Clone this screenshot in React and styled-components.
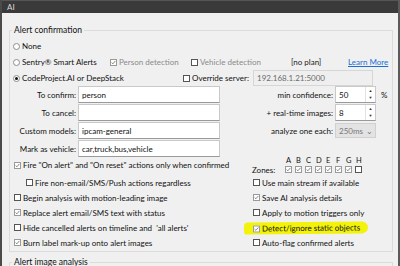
import React from 'react';
import styled, { createGlobalStyle } from 'styled-components';

const GlobalStyle = createGlobalStyle`
  html, body {
    margin: 0;
    padding: 0;
    background: #f0f0f0;
  }
  body {
    font-family: Lato, "Noto Sans", sans-serif;
    font-size: 8px;
    color: #111;
  }
`;

const Window = styled.div`
  width: 400px;
  height: 266px;
  box-sizing: border-box;
  border-left: 2px solid #4a4a4a;
  border-right: 2px solid #5a5a5a;
  background: #f0f0f0;
  overflow: hidden;
  display: flex;
  flex-direction: column;
`;

const TitleBar = styled.div`
  height: 13px;
  flex: none;
  display: flex;
  align-items: center;
  background: #3a3a3a;
  border-top: 1px solid #555;
  box-sizing: border-box;
  color: #d8d8d8;
  font-size: 8px;
  padding-left: 5px;
`;

const Body = styled.div`
  padding: 12px 5px 0 7px;
  display: flex;
  flex-direction: column;
  gap: 5px;
`;

const Group = styled.fieldset`
  margin: 0;
  padding: 2px 0 1px 3px;
  border: 1px solid #dcdcdc;
  min-width: 0;
`;

const Legend = styled.legend`
  padding: 0 2px;
  margin-left: -1px;
  font-size: 8.5px;
  line-height: 11px;
  color: #111;
`;

const RadioRow = styled.div`
  display: grid;
  grid-template-columns: ${(p) => p.$cols || '1fr'};
  align-items: center;
  height: ${(p) => p.$h || 16}px;
`;

const Choice = styled.label`
  display: flex;
  align-items: center;
  gap: 2px;
  white-space: nowrap;
  color: ${(p) => (p.$disabled ? '#8a8a8a' : '#111')};
`;

const RadioDot = styled.span`
  width: 7px;
  height: 7px;
  box-sizing: border-box;
  border-radius: 50%;
  border: 1px solid #8d8d8d;
  background: #fff;
  display: flex;
  align-items: center;
  justify-content: center;
  flex: none;

  &::after {
    content: '';
    width: 3px;
    height: 3px;
    border-radius: 50%;
    background: ${(p) => (p.$on ? '#111' : 'transparent')};
  }
`;

const Box = styled.span`
  width: 7px;
  height: 7px;
  box-sizing: border-box;
  border: 1px solid ${(p) => (p.$on ? '#9a9a9a' : '#555')};
  background: #fff;
  flex: none;
  display: flex;
  align-items: center;
  justify-content: center;
`;

const Check = ({ on }) => (
  <Box $on={on}>
    {on && (
      <svg width="5" height="5" viewBox="0 0 5 5">
        <path d="M0.6 2.6 L1.9 3.8 L4.4 0.9" fill="none" stroke="#6a6a6a" strokeWidth="0.8" />
      </svg>
    )}
  </Box>
);

const Muted = styled.span`
  color: #222;
`;

const Link = styled.a`
  color: #1a6fd6;
  text-decoration: underline;
`;

const Field = styled.div`
  height: ${(p) => p.$h || 17}px;
  box-sizing: border-box;
  border: 1px solid ${(p) => (p.$disabled ? '#d6d6d6' : '#c9c9c9')};
  border-bottom-color: ${(p) => (p.$disabled ? '#d6d6d6' : '#9a9a9a')};
  background: ${(p) => (p.$disabled ? '#efefef' : '#fff')};
  color: ${(p) => (p.$disabled ? '#6b6b6b' : '#111')};
  display: flex;
  align-items: center;
  padding-left: 3px;
  white-space: nowrap;
  overflow: hidden;
`;

const FormBlock = styled.div`
  display: grid;
  grid-template-columns: 63px 142px 1fr;
  grid-auto-rows: 17px;
  row-gap: 1px;
  column-gap: 2px;
`;

const Label = styled.div`
  text-align: right;
  align-self: center;
  white-space: nowrap;
`;

const RightCell = styled.div`
  display: grid;
  grid-template-columns: 1fr 41px 14px;
  column-gap: 2px;
  align-items: center;
`;

const Spin = styled(Field)`
  padding-right: 0;
  justify-content: space-between;
`;

const SpinArrows = styled.div`
  width: 9px;
  height: 100%;
  border-left: 1px solid #e2e2e2;
  display: flex;
  flex-direction: column;
  align-items: center;
  justify-content: space-around;
  font-size: 4px;
  color: #333;
  line-height: 1;
`;

const Combo = styled(Field)`
  justify-content: space-between;
  padding-right: 2px;
  background: #e3e3e3;
  border-color: #d0d0d0;
  color: #777;
`;

const Unit = styled.span`
  padding-left: 3px;
`;

const ChecksGrid = styled.div`
  display: grid;
  grid-template-columns: 239px 1fr;
  grid-template-rows: 17px repeat(5, 15px);
  align-items: center;
  margin-top: 1px;
`;

const Item = styled.label`
  display: flex;
  align-items: center;
  gap: 2px;
  white-space: nowrap;
  padding-left: ${(p) => p.$indent || 1}px;
  align-self: ${(p) => (p.$top ? 'start' : 'center')};
  margin-top: ${(p) => (p.$top ? 2 : 0)}px;
`;

const Highlight = styled(Item)`
  justify-self: start;
  margin-left: -8px;
  padding: 1px 8px 1px 9px;
  background: #f2f20a;
  border-radius: 4px 6px 6px 3px;
  transform: rotate(-0.6deg);
`;

const Zones = styled.div`
  display: grid;
  grid-template-columns: 33px repeat(8, 10px);
  grid-template-rows: 9px 9px;
  align-items: center;
  justify-items: start;
  margin-top: -3px;
`;

const ZoneLetter = styled.span`
  font-size: 7.5px;
  padding-left: 1px;
`;

const ZoneLabel = styled.span`
  grid-row: 2;
  grid-column: 1;
`;

const zoneLetters = ['A', 'B', 'C', 'D', 'E', 'F', 'G', 'H'];

export default function App() {
  return (
    <>
      <GlobalStyle />
      <Window>
        <TitleBar>AI</TitleBar>
        <Body>
          <Group>
            <Legend>Alert confirmation</Legend>

            <RadioRow>
              <Choice>
                <RadioDot />
                None
              </Choice>
            </RadioRow>

            <RadioRow $cols="97px 81px 100px 57px 1fr">
              <Choice>
                <RadioDot />
                Sentry® Smart Alerts
              </Choice>
              <Choice $disabled>
                <Check on />
                Person detection
              </Choice>
              <Choice $disabled>
                <Check />
                Vehicle detection
              </Choice>
              <Muted>[no plan]</Muted>
              <Link>Learn More</Link>
            </RadioRow>

            <RadioRow $cols="170px 70px 120px" $h={16}>
              <Choice>
                <RadioDot $on />
                CodeProject.AI or DeepStack
              </Choice>
              <Choice>
                <Check />
                Override server:
              </Choice>
              <Field $disabled $h={16}>192.168.1.21:5000</Field>
            </RadioRow>

            <FormBlock>
              <Label>To confirm:</Label>
              <Field>person</Field>
              <RightCell>
                <Label>min confidence:</Label>
                <Spin>
                  50
                  <SpinArrows>
                    <span>▲</span>
                    <span>▼</span>
                  </SpinArrows>
                </Spin>
                <Unit>%</Unit>
              </RightCell>

              <Label>To cancel:</Label>
              <Field />
              <RightCell>
                <Label>+ real-time images:</Label>
                <Spin>
                  8
                  <SpinArrows>
                    <span>▲</span>
                    <span>▼</span>
                  </SpinArrows>
                </Spin>
                <span />
              </RightCell>

              <Label>Custom models:</Label>
              <Field>ipcam-general</Field>
              <RightCell>
                <Label>analyze one each:</Label>
                <Combo $h={15}>
                  250ms
                  <span>⌄</span>
                </Combo>
                <span />
              </RightCell>

              <Label>Mark as vehicle:</Label>
              <Field>car,truck,bus,vehicle</Field>
              <span />
            </FormBlock>

            <ChecksGrid>
              <Item $top>
                <Check on />
                Fire "On alert" and "On reset" actions only when confirmed
              </Item>
              <Zones>
                {zoneLetters.map((z, i) => (
                  <ZoneLetter key={z} style={{ gridColumn: i + 2 }}>
                    {z}
                  </ZoneLetter>
                ))}
                <ZoneLabel>Zones:</ZoneLabel>
                {zoneLetters.map((z, i) => (
                  <Check key={z} on={i < 7} />
                ))}
              </Zones>

              <Item $indent={13}>
                <Check />
                Fire non-email/SMS/Push actions regardless
              </Item>
              <Item>
                <Check />
                Use main stream if available
              </Item>

              <Item>
                <Check />
                Begin analysis with motion-leading image
              </Item>
              <Item>
                <Check on />
                Save AI analysis details
              </Item>

              <Item>
                <Check on />
                Replace alert email/SMS text with status
              </Item>
              <Item>
                <Check />
                Apply to motion triggers only
              </Item>

              <Item>
                <Check />
                Hide cancelled alerts on timeline and&nbsp; 'all alerts'
              </Item>
              <Highlight>
                <Check on />
                Detect/ignore static objects
              </Highlight>

              <Item>
                <Check on />
                Burn label mark-up onto alert images
              </Item>
              <Item>
                <Check />
                Auto-flag confirmed alerts
              </Item>
            </ChecksGrid>
          </Group>

          <Group>
            <Legend>Alert image analysis</Legend>
          </Group>
        </Body>
      </Window>
    </>
  );
}
